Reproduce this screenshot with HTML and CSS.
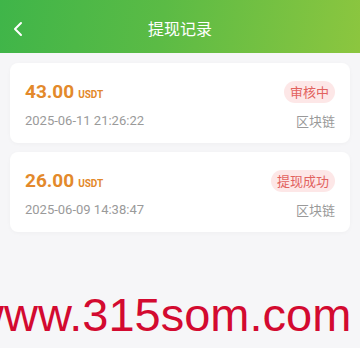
FILE: index.html
```html
<!DOCTYPE html>
<html lang="zh">
<head>
<meta charset="utf-8">
<link rel="stylesheet" href="styles.css">
</head>
<body>
<div class="page">
  <header class="topbar">
    <svg class="back" width="12" height="16" viewBox="0 0 12 16"><path d="M9 2 L3 8 L9 14" fill="none" stroke="#fff" stroke-width="2" stroke-linecap="round" stroke-linejoin="round"/></svg>
    <div class="title">提现记录</div>
  </header>
  <main class="list">
    <div class="card">
      <div class="row">
        <div class="amount">43.00<span class="unit">USDT</span></div>
        <div class="badge">审核中</div>
      </div>
      <div class="row sub">
        <div class="date">2025-06-11 21:26:22</div>
        <div class="chain">区块链</div>
      </div>
    </div>
    <div class="card">
      <div class="row">
        <div class="amount">26.00<span class="unit">USDT</span></div>
        <div class="badge">提现成功</div>
      </div>
      <div class="row sub">
        <div class="date">2025-06-09 14:38:47</div>
        <div class="chain">区块链</div>
      </div>
    </div>
  </main>
  <div class="watermark">www.315som.com</div>
</div>
</body>
</html>
```
FILE: styles.css
```css
html, body {
  margin: 0;
  padding: 0;
  background: #f6f6f8;
}
.page {
  position: relative;
  width: 360px;
  height: 348px;
  overflow: hidden;
  font-family: Roboto, "Noto Sans CJK SC", sans-serif;
}
.topbar {
  position: relative;
  height: 53px;
  background: linear-gradient(100deg, #3fb549 0%, #5bbb45 45%, #8cc63f 100%);
  display: flex;
  align-items: center;
  justify-content: center;
}
.back {
  position: absolute;
  left: 12px;
  top: 21px;
}
.title {
  color: #fff;
  font-size: 16px;
  font-family: "Noto Sans CJK SC", sans-serif;
  margin-top: 2px;
}
.list {
  padding: 10px 10px;
  display: flex;
  flex-direction: column;
  gap: 9px;
}
.card {
  background: #fff;
  border-radius: 8px;
  height: 80px;
  box-sizing: border-box;
  padding: 17px 15px 0 15px;
  box-shadow: 0 1px 4px rgba(0,0,0,0.03);
}
.row {
  display: flex;
  justify-content: space-between;
  align-items: center;
}
.sub {
  margin-top: 8px;
}
.amount {
  color: #e3892b;
  font-size: 19px;
  font-weight: 700;
  font-family: Roboto, sans-serif;
}
.unit {
  font-size: 10px;
  margin-left: 4px;
  font-weight: 700;
}
.badge {
  background: #fde7e7;
  color: #e2625e;
  font-size: 13px;
  font-family: "Noto Sans CJK SC", sans-serif;
  height: 22px;
  line-height: 22px;
  padding: 0 6px;
  border-radius: 11px;
}
.date {
  color: #9a9a9a;
  font-size: 13px;
  font-family: Roboto, sans-serif;
}
.chain {
  color: #999;
  font-size: 13px;
  font-family: "Noto Sans CJK SC", sans-serif;
}
.watermark {
  position: absolute;
  left: -30px;
  top: 285px;
  color: #d30a30;
  font-family: "Liberation Sans", Arial, sans-serif;
  font-size: 47px;
  line-height: 60px;
  white-space: nowrap;
}
```
